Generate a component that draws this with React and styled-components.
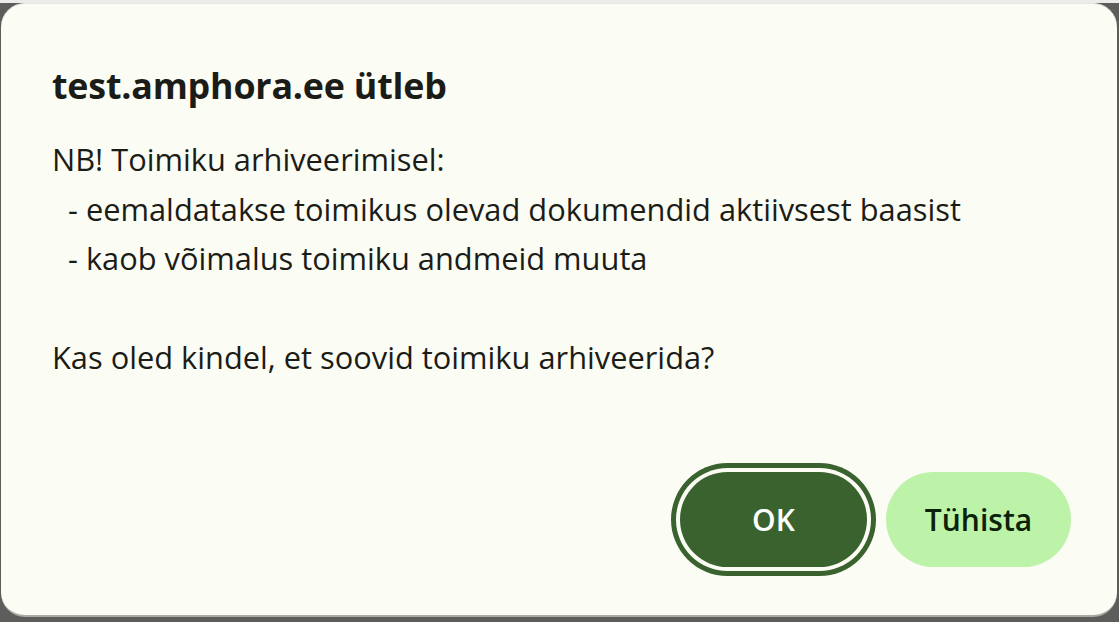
import React from "react";
import styled, { createGlobalStyle } from "styled-components";

const Global = createGlobalStyle`
  html, body { margin: 0; padding: 0; }
  body {
    width: 1119px;
    height: 622px;
    overflow: hidden;
    background: #5d5d5b;
    font-family: "Open Sans", "Noto Sans", sans-serif;
  }
`;

const Page = styled.div`
  display: flex;
  flex-direction: column;
  width: 1119px;
  height: 622px;
`;

const TopStrip = styled.div`
  height: 3px;
  background: #ececea;
  flex: none;
`;

const Dialog = styled.div`
  margin: 0 2px 0 1px;
  height: 614px;
  box-sizing: border-box;
  background: #fbfcf3;
  border-top: 1px solid #e6e7df;
  border-bottom: 2px solid #a9aaa4;
  border-radius: 24px;
  padding: 59px 46px 0 51px;
  display: flex;
  flex-direction: column;
  color: #1b1c17;
`;

const Title = styled.h1`
  margin: 0;
  font-size: 35.8px;
  font-weight: 700;
  line-height: 44px;
  letter-spacing: -0.2px;
`;

const Message = styled.div`
  margin-top: 28px;
  font-size: 30.8px;
  line-height: 49.5px;
  white-space: pre;
`;

const Actions = styled.div`
  margin-top: auto;
  margin-bottom: 48px;
  display: flex;
  justify-content: flex-end;
  gap: 19px;
`;

const Button = styled.button`
  height: 95px;
  border: none;
  border-radius: 48px;
  font-family: inherit;
  font-size: 30px;
  font-weight: 600;
  padding: 0;
  cursor: pointer;
  background: ${(p) => (p.$primary ? "#3a622e" : "#bdf2a9")};
  color: ${(p) => (p.$primary ? "#ffffff" : "#0b2108")};
  width: ${(p) => p.$w}px;
  box-shadow: ${(p) =>
    p.$primary ? "0 0 0 4px #fbfcf3, 0 0 0 9px #3a622e" : "none"};
`;

export default function App() {
  const text = `NB! Toimiku arhiveerimisel:
  - eemaldatakse toimikus olevad dokumendid aktiivsest baasist
  - kaob võimalus toimiku andmeid muuta

Kas oled kindel, et soovid toimiku arhiveerida?`;
  return (
    <Page>
      <Global />
      <TopStrip />
      <Dialog>
        <Title>test.amphora.ee ütleb</Title>
        <Message>{text}</Message>
        <Actions>
          <Button $primary $w={187}>OK</Button>
          <Button $w={185}>Tühista</Button>
        </Actions>
      </Dialog>
    </Page>
  );
}
